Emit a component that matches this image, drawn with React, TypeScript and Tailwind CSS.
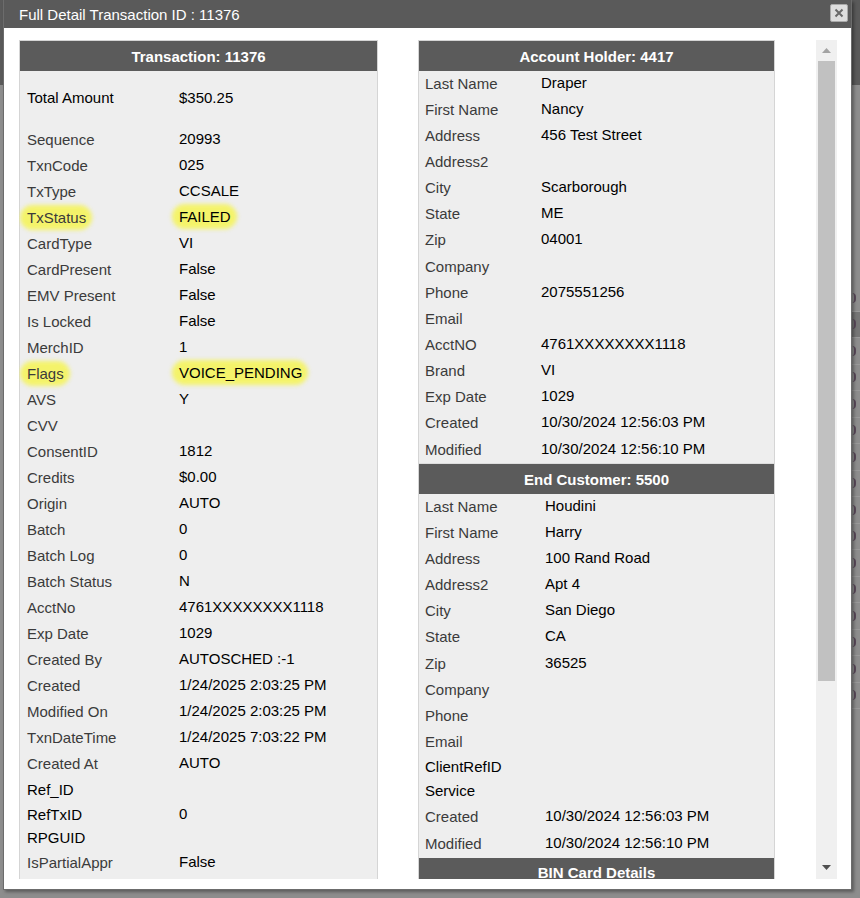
import React from 'react'

type Row = {
  label: string
  value?: string
  dark?: boolean
  hl?: boolean
  h: string
}

const txRows: Row[] = [
  { label: 'Sequence', value: '20993', h: 'h-[26px]' },
  { label: 'TxnCode', value: '025', h: 'h-[26px]' },
  { label: 'TxType', value: 'CCSALE', h: 'h-[26px]' },
  { label: 'TxStatus', value: 'FAILED', hl: true, h: 'h-[26px]' },
  { label: 'CardType', value: 'VI', h: 'h-[26px]' },
  { label: 'CardPresent', value: 'False', h: 'h-[26px]' },
  { label: 'EMV Present', value: 'False', h: 'h-[26px]' },
  { label: 'Is Locked', value: 'False', h: 'h-[26px]' },
  { label: 'MerchID', value: '1', h: 'h-[26px]' },
  { label: 'Flags', value: 'VOICE_PENDING', hl: true, h: 'h-[26px]' },
  { label: 'AVS', value: 'Y', h: 'h-[26px]' },
  { label: 'CVV', value: '', h: 'h-[26px]' },
  { label: 'ConsentID', value: '1812', h: 'h-[26px]' },
  { label: 'Credits', value: '$0.00', h: 'h-[26px]' },
  { label: 'Origin', value: 'AUTO', h: 'h-[26px]' },
  { label: 'Batch', value: '0', h: 'h-[26px]' },
  { label: 'Batch Log', value: '0', h: 'h-[26px]' },
  { label: 'Batch Status', value: 'N', h: 'h-[26px]' },
  { label: 'AcctNo', value: '4761XXXXXXXX1118', h: 'h-[26px]' },
  { label: 'Exp Date', value: '1029', h: 'h-[26px]' },
  { label: 'Created By', value: 'AUTOSCHED :-1', h: 'h-[26px]' },
  { label: 'Created', value: '1/24/2025 2:03:25 PM', h: 'h-[26px]' },
  { label: 'Modified On', value: '1/24/2025 2:03:25 PM', h: 'h-[26px]' },
  { label: 'TxnDateTime', value: '1/24/2025 7:03:22 PM', h: 'h-[26px]' },
  { label: 'Created At', value: 'AUTO', h: 'h-[26px]' },
  { label: 'Ref_ID', dark: true, h: 'h-[26px]' },
  { label: 'RefTxID', value: '0', dark: true, h: 'h-[24px]' },
  { label: 'RPGUID', dark: true, h: 'h-[22px]' },
  { label: 'IsPartialAppr', value: 'False', h: 'h-[28px]' },
]

const holderRows: Row[] = [
  { label: 'Last Name', value: 'Draper', h: 'h-[26.15px]' },
  { label: 'First Name', value: 'Nancy', h: 'h-[26.15px]' },
  { label: 'Address', value: '456 Test Street', h: 'h-[26.15px]' },
  { label: 'Address2', value: '', h: 'h-[26.15px]' },
  { label: 'City', value: 'Scarborough', h: 'h-[26.15px]' },
  { label: 'State', value: 'ME', h: 'h-[26.15px]' },
  { label: 'Zip', value: '04001', h: 'h-[26.15px]' },
  { label: 'Company', value: '', h: 'h-[26.15px]' },
  { label: 'Phone', value: '2075551256', h: 'h-[26.15px]' },
  { label: 'Email', value: '', h: 'h-[26.15px]' },
  { label: 'AcctNO', value: '4761XXXXXXXX1118', h: 'h-[26.15px]' },
  { label: 'Brand', value: 'VI', h: 'h-[26.15px]' },
  { label: 'Exp Date', value: '1029', h: 'h-[26.15px]' },
  { label: 'Created', value: '10/30/2024 12:56:03 PM', h: 'h-[26.15px]' },
  { label: 'Modified', value: '10/30/2024 12:56:10 PM', h: 'h-[26.15px]' },
]

const customerRows: Row[] = [
  { label: 'Last Name', value: 'Houdini', h: 'h-[26.15px]' },
  { label: 'First Name', value: 'Harry', h: 'h-[26.15px]' },
  { label: 'Address', value: '100 Rand Road', h: 'h-[26.15px]' },
  { label: 'Address2', value: 'Apt 4', h: 'h-[26.15px]' },
  { label: 'City', value: 'San Diego', h: 'h-[26.15px]' },
  { label: 'State', value: 'CA', h: 'h-[26.15px]' },
  { label: 'Zip', value: '36525', h: 'h-[26.15px]' },
  { label: 'Company', value: '', h: 'h-[26.15px]' },
  { label: 'Phone', value: '', h: 'h-[26.15px]' },
  { label: 'Email', value: '', h: 'h-[26.15px]' },
  { label: 'ClientRefID', dark: true, h: 'h-[24px]' },
  { label: 'Service', dark: true, h: 'h-[24px]' },
  { label: 'Created', value: '10/30/2024 12:56:03 PM', h: 'h-[28px]' },
  { label: 'Modified', value: '10/30/2024 12:56:10 PM', h: 'h-[26px]' },
]

function Marked({ text, on }: { text: string; on?: boolean }) {
  if (!on) return <>{text}</>
  return (
    <span className="relative inline-block">
      <span className="absolute -left-[7px] -right-[6px] -top-[4px] -bottom-[4px] rounded-full bg-[#f4f36a] blur-[2px]" />
      <span className="relative">{text}</span>
    </span>
  )
}

function DetailRow({ row, labelW, pl }: { row: Row; labelW: string; pl: string }) {
  return (
    <div className={`flex items-center ${row.h}`}>
      <div className={`${labelW} ${pl} pb-[2px] shrink-0 ${row.dark ? 'text-black' : 'text-[#3b3b3b]'}`}>
        <Marked text={row.label} on={row.hl} />
      </div>
      <div className="pb-[4px] text-black whitespace-nowrap">
        <Marked text={row.value ?? ''} on={row.hl} />
      </div>
    </div>
  )
}

function Header({ children }: { children: React.ReactNode }) {
  return (
    <div className="h-[30px] shrink-0 bg-[#5b5b5b] text-white font-bold flex items-center justify-center">
      {children}
    </div>
  )
}

export default function App() {
  return (
    <div
      className="relative w-[860px] h-[898px] overflow-hidden bg-[#8d8d8d] text-[15px] leading-[17px]"
      style={{ fontFamily: '"Liberation Sans", Arial, sans-serif' }}
    >
      {/* page behind the overlay */}
      <div className="flex flex-col h-full">
        <div className="h-[85px] bg-[#5a5a5a]" />
        <div className="flex flex-col items-end pt-[200px]">
          {Array.from({ length: 16 }).map((_, i) => (
            <div
              key={i}
              className={`w-[8px] h-[26.5px] border-b border-[#9a9a9a] flex items-center ${i === 1 ? 'bg-[#767676]' : ''}`}
            >
              <div className="w-[4px] h-[10px] border-r-2 border-[#5a4a5a] rounded-r-full" />
            </div>
          ))}
        </div>
      </div>

      {/* dialog */}
      <div className="absolute top-0 left-[3px] w-[849px] h-[890px] bg-white border border-t-0 border-[#6c6c6c] shadow-[2px_2px_3px_rgba(0,0,0,0.35)] flex flex-col">
        <div className="h-[28px] shrink-0 bg-[#5a5a5a] flex items-center justify-between pl-[15px] pr-[3px]">
          <span className="text-white">Full Detail Transaction ID : 11376</span>
          <button className="w-[18px] h-[18px] bg-[#dedede] border border-[#a9a9a9] rounded-[2px] flex items-center justify-center mb-[2px]">
            <svg width="10" height="10" viewBox="0 0 10 10">
              <path d="M1.5 1.5 L8.5 8.5 M8.5 1.5 L1.5 8.5" stroke="#6a6a6a" strokeWidth="2" />
            </svg>
          </button>
        </div>

        <div className="flex pt-[12px] pl-[15px]">
          <div className="w-[818px] h-[839px] flex overflow-hidden">
            <div className="w-[797px] flex items-start overflow-hidden">
              {/* Transaction */}
              <div className="w-[359px] h-[860px] shrink-0 bg-[#eeeeee] border border-[#d5d5d5] flex flex-col">
                <Header>Transaction: 11376</Header>
                <div className="h-[56px] flex items-center">
                  <div className="w-[159px] pl-[7px] pb-[4px] shrink-0 text-black">Total Amount</div>
                  <div className="pb-[4px] text-black">$350.25</div>
                </div>
                {txRows.map((r) => (
                  <DetailRow key={r.label} row={r} labelW="w-[159px]" pl="pl-[7px]" />
                ))}
              </div>

              {/* Account holder + end customer */}
              <div className="w-[357px] h-[860px] shrink-0 ml-[40px] bg-[#eeeeee] border border-[#d5d5d5] flex flex-col">
                <Header>Account Holder: 4417</Header>
                {holderRows.map((r) => (
                  <DetailRow key={r.label} row={r} labelW="w-[122px]" pl="pl-[6px]" />
                ))}
                <div className="h-[1px] shrink-0 bg-[#dddddd]" />
                <Header>End Customer: 5500</Header>
                {customerRows.map((r) => (
                  <DetailRow key={r.label} row={r} labelW="w-[126px]" pl="pl-[6px]" />
                ))}
                <Header>BIN Card Details</Header>
              </div>
            </div>

            {/* scrollbar */}
            <div className="w-[21px] h-full bg-[#f0f0f0] flex flex-col items-center">
              <div className="h-[21px] flex items-center justify-center">
                <svg width="9" height="5" viewBox="0 0 9 5">
                  <path d="M0 5 L4.5 0 L9 5 Z" fill="#a3a3a3" />
                </svg>
              </div>
              <div className="w-[17px] h-[620px] bg-[#c1c1c1]" />
              <div className="flex-1" />
              <div className="h-[21px] flex items-center justify-center mb-[1px]">
                <svg width="9" height="5" viewBox="0 0 9 5">
                  <path d="M0 0 L9 0 L4.5 5 Z" fill="#505050" />
                </svg>
              </div>
            </div>
          </div>
        </div>
      </div>
    </div>
  )
}
